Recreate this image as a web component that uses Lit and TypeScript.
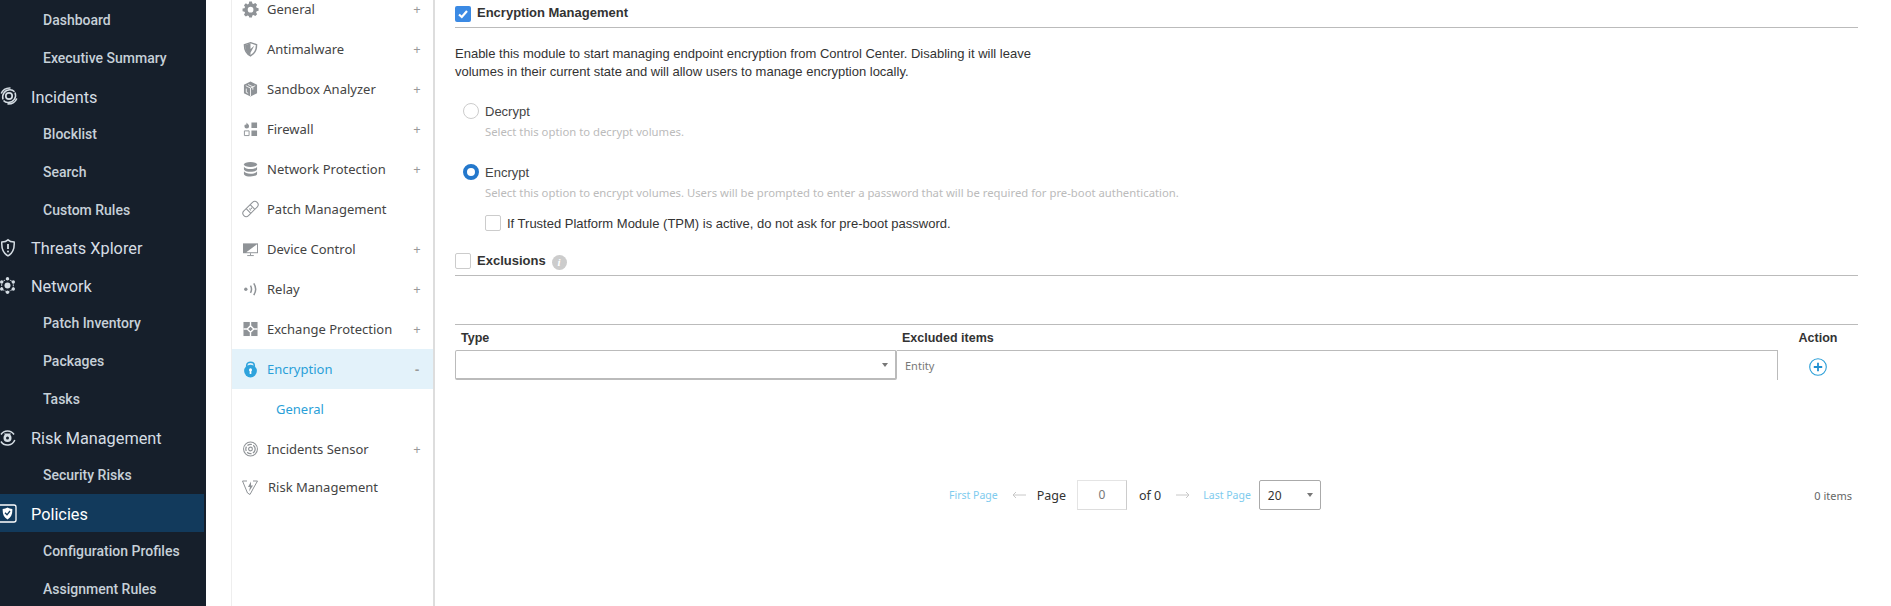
import { LitElement, html, css, svg } from "lit";
import { customElement } from "lit/decorators.js";

const G = "#8f9397";
const navIcons: Record<string, any> = {
  gear: svg`<path fill="${G}" fill-rule="evenodd" d="M6.500 0h3l.5 2.200 1.300.6 2-1.200 2.100 2.100-1.200 2 .6 1.300 2.200.5v3l-2.200.5-.6 1.300 1.200 2-2.100 2.100-2-1.200-1.300.6-.5 2.200h-3L6 16.300l-1.300-.6-2 1.200L.6 14.800l1.200-2-.6-1.300L-1 11V8l2.200-.5.6-1.300-1.200-2L2.700 2.100l2 1.200L6 2.700zM8 6a3.200 3.200 0 1 0 0 6.400A3.200 3.200 0 0 0 8 6z" transform="translate(0 -1) scale(.95) translate(.5 1)"/>`,
  shield: svg`<path fill="none" stroke="${G}" stroke-width="1.500" d="M8 1.200 14.500 3.500c0 6-1.800 9.500-6.500 11.800C3.300 13 1.500 9.500 1.500 3.500z"/><path fill="${G}" d="M8 1.800v13C4 12.800 2.300 9.500 2.200 4zM8 8l4-3.500-4 7.500z"/>`,
  box: svg`<path fill="${G}" d="M8 0 15 3.500v9L8 16 1 12.500v-9z"/><path fill="none" stroke="#fff" stroke-width=".9" d="M3 4.500 8 7l5-2.500M8 7v8.500M5.500 3.200l5 2.500v3M3.500 7.500v4l2 1"/>`,
  firewall: svg`<path fill="${G}" d="M9 1h6v6H9zM9 9.500h6v6H9zM4 1c.5 1.500 2.500 2 2.500 4A2.500 2.500 0 0 1 1.500 5c0-1 .6-1.500 1-2 .2.700.5.900.8.900C3.500 3 3.500 2 4 1z"/><path fill="none" stroke="${G}" d="M1.500 10h5v5h-5z"/>`,
  db: svg`<ellipse cx="8" cy="3.200" rx="7" ry="2.700" fill="${G}"/><path fill="${G}" d="M1 5.500c1 1.800 3.500 2.500 7 2.500s6-.7 7-2.500v2.700C15 10 11.500 11 8 11s-7-1-7-2.800zM1 10.500c1 1.800 3.500 2.500 7 2.500s6-.7 7-2.500v2.700C15 15 11.500 16 8 16s-7-1-7-2.800z"/>`,
  patch: svg`<g transform="rotate(-45 8 8)" fill="none" stroke="${G}" stroke-width="1.100"><rect x="-2" y="4.500" width="20" height="7" rx="3.500"/><path d="M5 4.500v7M11 4.500v7"/></g><g fill="${G}"><circle cx="7.300" cy="8" r=".7"/><circle cx="9" cy="7.200" r=".7"/><circle cx="8" cy="9" r=".7"/></g>`,
  monitor: svg`<path fill="${G}" d="M0 2h16v10.500H0z"/><path fill="#fff" d="M15 3v8.500H3.500z"/><path fill="none" stroke="${G}" d="M8 12.500v2M4.500 15h7"/>`,
  relay: svg`<circle cx="3" cy="8.300" r="1.800" fill="${G}"/><path fill="none" stroke="${G}" stroke-width="1.600" d="M8 4.500c1.300 2.300 1.300 5.300 0 7.600M11.500 2c2.500 3.800 2.500 8.700 0 12.600"/>`,
  exchange: svg`<rect x=".5" y=".5" width="15" height="15" fill="${G}"/><path fill="none" stroke="#fff" stroke-width="1.500" d="M8 4.500 11.500 8 8 11.500 4.500 8zM8 .5v4M8 11.500v4M.5 8h4M11.500 8h4"/><path fill="${G}" d="M6.500 8 8 6.500 9.500 8 8 9.500z"/>`,
  lock: svg`<circle cx="8" cy="10.200" r="6.800" fill="#2ea3dc"/><path fill="none" stroke="#2ea3dc" stroke-width="1.700" d="M4 5.500V4.200C4 2 5.800 .8 8 .8s4 1.200 4 3.400v1.300"/><circle cx="8" cy="8.800" r="1.600" fill="#fff"/><rect x="7.100" y="9" width="1.800" height="4.300" fill="#fff"/>`,
  sensor: svg`<circle cx="8" cy="8" r="7.400" fill="none" stroke="${G}" stroke-width="1.100"/><circle cx="8" cy="8" r="5" fill="none" stroke="${G}" stroke-width="1.300" stroke-dasharray="5 1.500"/><circle cx="8" cy="8" r="2" fill="none" stroke="${G}" stroke-width="1.200"/>`,
  risk: svg`<path fill="none" stroke="${G}" stroke-width="1" d="M.5 2h4.500M11 2h4.500l-4 7M5.500 14 .5 2M5.500 14 8 15.500 11.500 9"/><path fill="${G}" d="M9 2.500 6 8h2l-1 4.500L11 6.500H9z"/>`,
};

const W = "#d5dde4";
const sideIcons: Record<string, any> = {
  incidents: svg`<circle cx="9" cy="9" r="3.200" fill="none" stroke="${W}" stroke-width="1.700"/><path fill="none" stroke="${W}" stroke-width="1.500" d="M3 12.500C1.500 7.500 5 2.800 10 2.800c2 0 3.300.7 4.500 2M15 5.500C17 10.500 13.500 15.500 8 15.500c-2 0-3.500-.8-4.500-2M1.200 6.500C3 2 6 .7 10.500.9M16.800 11.500C15 16 12 17.300 7.500 17.100"/>`,
  threats: svg`<path fill="none" stroke="${W}" stroke-width="1.500" d="M8 .9c1.500 1.500 3.800 2.100 6.200 2.200.4 6.500-1.200 11-6.200 13.800C3 14.100 1.400 9.600 1.800 3.100 4.200 3 6.500 2.400 8 .9z"/><path stroke="${W}" stroke-width="1.800" d="M8 5v5"/><circle cx="8" cy="12.600" r="1" fill="${W}"/>`,
  network: svg`<g fill="${W}"><circle cx="7.500" cy="8.500" r="3"/><circle cx="7.500" cy="1.700" r="1.700"/><circle cx="7.500" cy="15.300" r="1.700"/><circle cx="1.700" cy="5" r="1.700"/><circle cx="13.300" cy="5" r="1.700"/><circle cx="1.700" cy="12" r="1.700"/><circle cx="13.300" cy="12" r="1.700"/></g><path fill="none" stroke="${W}" stroke-width=".9" stroke-dasharray="2 1" d="M7.500 1.700 13.300 5v7l-5.800 3.300L1.700 12V5z"/>`,
  risk: svg`<circle cx="7.500" cy="9" r="4" fill="${W}"/><circle cx="7.500" cy="9" r="1.500" fill="#161f2b"/><path fill="none" stroke="${W}" stroke-width="1.500" d="M1 5.500A7.800 7.800 0 0 1 14 5.500M14.800 11A7.800 7.800 0 0 1 1 12.500"/><path fill="${W}" d="M4 4.500h7l-1.300 2H5.300z"/>`,
  policies: svg`<rect x="-3" y="1" width="19" height="17" rx="2" fill="none" stroke="#fff" stroke-width="1.300"/><path fill="#fff" d="M7.500 3.500c1.300.9 3 1.400 4.800 1.500.3 5-1 8.500-4.800 10.500C3.700 13.500 2.400 10 2.700 5c1.800-.1 3.500-.6 4.800-1.500z"/><path fill="none" stroke="#123a5c" stroke-width="1.300" d="M5 8.800 7 10.800l3-3.800"/>`,
};

type Side = { t: string; icon?: string; active?: boolean };
const side: Side[] = [
  { t: "Dashboard" },
  { t: "Executive Summary" },
  { t: "Incidents", icon: "incidents" },
  { t: "Blocklist" },
  { t: "Search" },
  { t: "Custom Rules" },
  { t: "Threats Xplorer", icon: "threats" },
  { t: "Network", icon: "network" },
  { t: "Patch Inventory" },
  { t: "Packages" },
  { t: "Tasks" },
  { t: "Risk Management", icon: "risk" },
  { t: "Security Risks" },
  { t: "Policies", icon: "policies", active: true },
  { t: "Configuration Profiles" },
  { t: "Assignment Rules" },
];

type Nav = { t: string; icon?: string; mark?: string; active?: boolean; sub?: boolean };
const nav: Nav[] = [
  { t: "General", icon: "gear", mark: "+" },
  { t: "Antimalware", icon: "shield", mark: "+" },
  { t: "Sandbox Analyzer", icon: "box", mark: "+" },
  { t: "Firewall", icon: "firewall", mark: "+" },
  { t: "Network Protection", icon: "db", mark: "+" },
  { t: "Patch Management", icon: "patch" },
  { t: "Device Control", icon: "monitor", mark: "+" },
  { t: "Relay", icon: "relay", mark: "+" },
  { t: "Exchange Protection", icon: "exchange", mark: "+" },
  { t: "Encryption", icon: "lock", mark: "-", active: true },
  { t: "General", sub: true },
  { t: "Incidents Sensor", icon: "sensor", mark: "+" },
  { t: "Risk Management", icon: "risk" },
];

@customElement("app-root")
export class AppRoot extends LitElement {
  static styles = css`
    :host { display: block; width: 1891px; height: 606px; overflow: hidden; background: #fff; font-family: "Liberation Sans", Arial, sans-serif; color: #333; }
    .page { display: flex; height: 606px; overflow: hidden; }
    .sidebar { width: 206px; flex: none; background: #161f2b; padding-top: 1px; font-family: Roboto, sans-serif; overflow: hidden; }
    .srow { height: 37.930px; width: 204px; display: flex; align-items: center; padding-left: 43px; box-sizing: border-box; font-size: 14px; font-weight: 500; color: #c6d0d8; }
    .srow.parent { padding-left: 0; font-size: 16.300px; font-weight: 400; color: #d5dde4; padding-top: 3px; }
    .srow.parent svg { width: 18px; height: 18px; flex: none; margin: -2px 13px 0 0; overflow: visible; }
    .srow.active { background: #123a5c; color: #fff; }
    .nav { width: 204px; flex: none; margin-left: 25px; box-sizing: border-box; border-left: 1px solid #eee; border-right: 2px solid #ddd; font-family: Tahoma, "Noto Sans", sans-serif; font-size: 13px; color: #444; overflow: hidden; }
    .nlist { margin-top: -11px; }
    .nrow { height: 40px; display: flex; align-items: center; padding: 0 11px 0 11px; }
    .nrow svg { width: 15px; height: 16px; flex: none; margin-right: 9px; overflow: visible; }
    .nrow .t { flex: 1; white-space: nowrap; }
    .nrow .mark { color: #999; font-size: 13px; width: 10px; text-align: center; }
    .nrow.active { background: #e3f2fa; color: #2a9fd8; }
    .nrow.active .mark { font-weight: 700; }
    .nrow.sub { padding-left: 44px; color: #2a9fd8; }
    .nrow.last { height: 36px; }
    .nrow.last svg { width: 16px; margin-left: -1px; margin-right: 10px; }
    .main { flex: 1; min-width: 0; padding: 0 33px 0 20px; font-size: 13px; }
    .head { display: flex; align-items: center; gap: 6px; height: 25px; padding-bottom: 2px; border-bottom: 1px solid #bbb; font-size: 13px; font-weight: 700; color: #333; }
    .head .box { margin-top: 2px; }
    .head.ex { height: 22px; padding-bottom: 0; align-items: flex-start; margin-top: 22px; }
    .head.ex .box { margin-top: 0; }
    .head.ex .cap { line-height: 16px; }
    .box { width: 14px; height: 14px; flex: none; border: 1px solid #ccc; border-radius: 2px; background: #fff; }
    .box.on { width: 16px; height: 16px; border: 0; background: #3b8ae4; display: flex; align-items: center; justify-content: center; }
    .box.on svg { width: 12px; height: 10px; }
    .info { width: 15px; height: 15px; border-radius: 50%; background: #ccc; color: #fff; font: italic 700 11px/15px "Liberation Serif", serif; text-align: center; margin-top: 2px; }
    .desc { margin: 17px 0 0; line-height: 18px; width: 620px; font-size: 13px; color: #333; }
    .opt { margin-left: 8px; }
    .oline { display: flex; align-items: center; gap: 6px; height: 16px; font-size: 13px; color: #444; }
    .radio { width: 14px; height: 14px; flex: none; border: 1px solid #ccc; border-radius: 50%; }
    .radio.on { width: 8px; height: 8px; border: 4px solid #2478cc; }
    .help { margin: 5px 0 0 22px; line-height: 16px; font-size: 11.300px; color: #bbb; font-family: Tahoma, "Noto Sans", sans-serif; }
    .o1 { margin-top: 22px; }
    .o2 { margin-top: 24px; }
    .tpm { display: flex; align-items: center; gap: 6px; margin: 14px 0 0 22px; height: 16px; color: #333; }
    .grid { margin-top: 48px; border-top: 1px solid #bbb; display: grid; grid-template-columns: 442px 1fr 80px; }
    .th { height: 25px; display: flex; align-items: center; font-weight: 700; color: #333; font-size: 12.500px; }
    .th.a { padding-left: 6px; }
    .th.b { padding-left: 5px; }
    .th.c { justify-content: center; }
    .sel { height: 27px; border: 1px solid #bbb; border-bottom-width: 2px; border-right-width: 2px; border-radius: 2px; display: flex; align-items: center; justify-content: flex-end; padding-right: 7px; }
    .caret { width: 0; height: 0; border: 3px solid transparent; border-top: 4px solid #777; border-bottom: 0; }
    .ent { height: 29px; border-top: 1px solid #bbb; border-right: 1px solid #bbb; padding-left: 8px; display: flex; align-items: center; color: #777; font-size: 11px; font-family: Tahoma, "Noto Sans", sans-serif; }
    .act { display: flex; align-items: center; justify-content: center; height: 30px; }
    .act svg { width: 18px; height: 18px; margin-top: 4px; }
    .pager { margin-top: 100px; height: 30px; display: flex; align-items: center; font-family: Tahoma, "Noto Sans", sans-serif; color: #333; font-size: 12.500px; padding-left: 494px; }
    .lnk { color: #7ecbee; font-size: 10.500px; white-space: nowrap; }
    .arr { width: 14px; height: 8px; flex: none; }
    .pin { width: 48px; height: 28px; border: 1px solid #e4e4e4; border-right-color: #ccc; border-bottom-color: #ddd; text-align: center; line-height: 28px; color: #777; font-size: 12px; flex: none; }
    .psel { border: 1px solid #aaa; border-radius: 2px; display: flex; align-items: center; justify-content: space-between; padding: 0 7px 0 8px; box-sizing: border-box; height: 30px; width: 62px; font-size: 12px; flex: none; }
    .items { margin-left: auto; font-size: 11px; color: #666; margin-right: 6px; }
    .m1 { margin-left: 14px; } .m2 { margin-left: 11px; } .m3 { margin-left: 11px; } .m4 { margin-left: 12px; } .m5 { margin-left: 15px; } .m6 { margin-left: 13px; } .m7 { margin-left: 8px; }
  `;

  render() {
    const arrow = (left: boolean) => html`<svg class="arr ${left ? "m1" : "m5"}" viewBox="0 0 14 8"><path fill="none" stroke="#c8c8c8" d="${left ? "M14 4H1M4 1 1 4l3 3" : "M0 4h13M10 1l3 3-3 3"}"/></svg>`;
    return html`<div class="page">
      <div class="sidebar">
        ${side.map((s) => html`<div class="srow ${s.icon ? "parent" : ""} ${s.active ? "active" : ""}">
          ${s.icon ? html`<svg viewBox="0 0 18 18">${sideIcons[s.icon]}</svg>` : ""}<span>${s.t}</span></div>`)}
      </div>
      <div class="nav"><div class="nlist">
        ${nav.map((n, i) => html`<div class="nrow ${n.active ? "active" : ""} ${n.sub ? "sub" : ""} ${i === nav.length - 1 ? "last" : ""}">
          ${n.icon ? html`<svg viewBox="0 0 16 16">${navIcons[n.icon]}</svg>` : ""}
          <span class="t">${n.t}</span>${n.mark ? html`<span class="mark">${n.mark}</span>` : ""}</div>`)}
      </div></div>
      <div class="main">
        <div class="head"><span class="box on"><svg viewBox="0 0 12 10"><path fill="none" stroke="#fff" stroke-width="2.200" d="M2 5.500 4.800 8 10 2"/></svg></span><span>Encryption Management</span></div>
        <p class="desc">Enable this module to start managing endpoint encryption from Control Center. Disabling it will leave<br />volumes in their current state and will allow users to manage encryption locally.</p>
        <div class="opt o1"><div class="oline"><span class="radio"></span><span>Decrypt</span></div>
          <div class="help">Select this option to decrypt volumes.</div></div>
        <div class="opt o2"><div class="oline"><span class="radio on"></span><span>Encrypt</span></div>
          <div class="help">Select this option to encrypt volumes. Users will be prompted to enter a password that will be required for pre-boot authentication.</div>
          <div class="tpm"><span class="box"></span><span>If Trusted Platform Module (TPM) is active, do not ask for pre-boot password.</span></div></div>
        <div class="head ex"><span class="box"></span><span class="cap">Exclusions</span><span class="info">i</span></div>
        <div class="grid">
          <div class="th a">Type</div><div class="th b">Excluded items</div><div class="th c">Action</div>
          <div class="sel"><span class="caret"></span></div>
          <div class="ent">Entity</div>
          <div class="act"><svg viewBox="0 0 18 18"><circle cx="9" cy="9" r="8.300" fill="none" stroke="#2a9fd8" stroke-width="1.100"/><path stroke="#1f8fd0" stroke-width="1.800" d="M9 4.800v8.400M4.800 9h8.400"/></svg></div>
        </div>
        <div class="pager">
          <span class="lnk">First Page</span>${arrow(true)}<span class="m2">Page</span>
          <span class="pin m3">0</span><span class="m4">of 0</span>${arrow(false)}
          <span class="lnk m6">Last Page</span><span class="psel m7"><span>20</span><span class="caret"></span></span>
          <span class="items">0 items</span>
        </div>
      </div>
    </div>`;
  }
}
